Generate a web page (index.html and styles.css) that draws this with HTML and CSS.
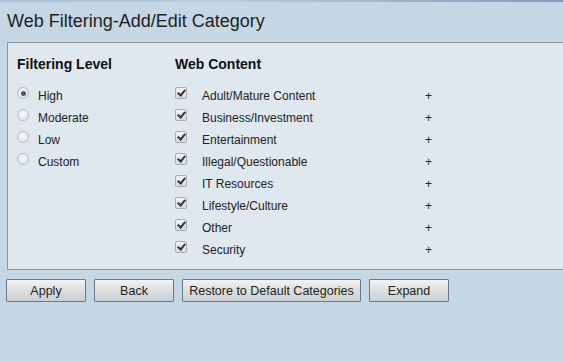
FILE: index.html
```html
<!DOCTYPE html>
<html lang="en">
<head>
    <meta charset="UTF-8">
    <meta name="viewport" content="width=device-width, initial-scale=1.0">
    <title>Web Filtering-Add/Edit Category</title>
    <link rel="stylesheet" href="styles.css">
</head>
<body>
    <div class="top-line"></div>
    <h1 class="page-title">Web Filtering-Add/Edit Category</h1>

    <div class="panel">
        <div class="level-section">
            <h3>Filtering Level</h3>
            <div class="option-row"><span class="radio selected"></span><span>High</span></div>
            <div class="option-row"><span class="radio"></span><span>Moderate</span></div>
            <div class="option-row"><span class="radio"></span><span>Low</span></div>
            <div class="option-row"><span class="radio"></span><span>Custom</span></div>
        </div>

        <div class="content-section">
            <h3>Web Content</h3>
            <div class="option-row"><span class="check"></span><span class="cat-name">Adult/Mature Content</span><span class="expand">+</span></div>
            <div class="option-row"><span class="check"></span><span class="cat-name">Business/Investment</span><span class="expand">+</span></div>
            <div class="option-row"><span class="check"></span><span class="cat-name">Entertainment</span><span class="expand">+</span></div>
            <div class="option-row"><span class="check"></span><span class="cat-name">Illegal/Questionable</span><span class="expand">+</span></div>
            <div class="option-row"><span class="check"></span><span class="cat-name">IT Resources</span><span class="expand">+</span></div>
            <div class="option-row"><span class="check"></span><span class="cat-name">Lifestyle/Culture</span><span class="expand">+</span></div>
            <div class="option-row"><span class="check"></span><span class="cat-name">Other</span><span class="expand">+</span></div>
            <div class="option-row"><span class="check"></span><span class="cat-name">Security</span><span class="expand">+</span></div>
        </div>
    </div>

    <div class="button-bar">
        <button class="btn">Apply</button>
        <button class="btn">Back</button>
        <button class="btn btn-wide">Restore to Default Categories</button>
        <button class="btn">Expand</button>
    </div>
</body>
</html>
```

FILE: styles.css
```css
html, body {
    margin: 0;
    height: 100%;
}

body {
    font-family: "Liberation Sans", Arial, sans-serif;
    background: #c5d6e5;
    color: #222;
    overflow: hidden;
}

.top-line {
    height: 2px;
    background: linear-gradient(to right, #a9c0d8, #b8cce0 40%, #7f9dbb);
}

.page-title {
    margin: 0;
    padding: 8px 0 0 7px;
    height: 32px;
    font-size: 18px;
    font-weight: normal;
    line-height: 22px;
    color: #1e1e1e;
}

.panel {
    display: flex;
    margin: 0 -20px 0 7px;
    height: 226px;
    border: 1px solid #8896a4;
    background: #dfe7ef;
    padding: 0 9px;
}

.panel h3 {
    margin: 0;
    padding-top: 13px;
    height: 29px;
    font-size: 14px;
    line-height: 16px;
    color: #111;
}

.level-section {
    width: 158px;
}

.option-row {
    display: flex;
    align-items: center;
    height: 22px;
    font-size: 12px;
}

.radio {
    box-sizing: border-box;
    width: 12px;
    height: 12px;
    margin: -6px 9px 0 0;
    border: 1px solid #b9bdc2;
    border-radius: 50%;
    background: radial-gradient(circle at 50% 40%, #fafafa, #d9dde1);
    display: flex;
    align-items: center;
    justify-content: center;
}

.radio.selected::after {
    content: "";
    width: 5px;
    height: 5px;
    border-radius: 50%;
    background: #555;
}

.check {
    box-sizing: border-box;
    width: 12px;
    height: 12px;
    margin: -6px 15px 0 0;
    border: 1px solid #a8adb3;
    border-radius: 2px;
    background: linear-gradient(#f4f4f4, #d6d9dc);
    position: relative;
}

.check::after {
    content: "";
    position: absolute;
    left: 3px;
    top: 0px;
    width: 3px;
    height: 6px;
    border: solid #333;
    border-width: 0 2px 2px 0;
    transform: rotate(40deg);
}

.cat-name {
    width: 223px;
}

.expand {
    font-size: 12px;
}

.button-bar {
    display: flex;
    gap: 8px;
    padding: 9px 0 0 6px;
}

.btn {
    width: 80px;
    height: 23px;
    padding: 0;
    font-family: "Liberation Sans", Arial, sans-serif;
    font-size: 12.5px;
    color: #222;
    border: 1px solid #6e7780;
    border-radius: 1px;
    background: linear-gradient(#f2f3f4, #dcdfe2 50%, #cbd0d4);
}

.btn-wide {
    width: 179px;
}
```
